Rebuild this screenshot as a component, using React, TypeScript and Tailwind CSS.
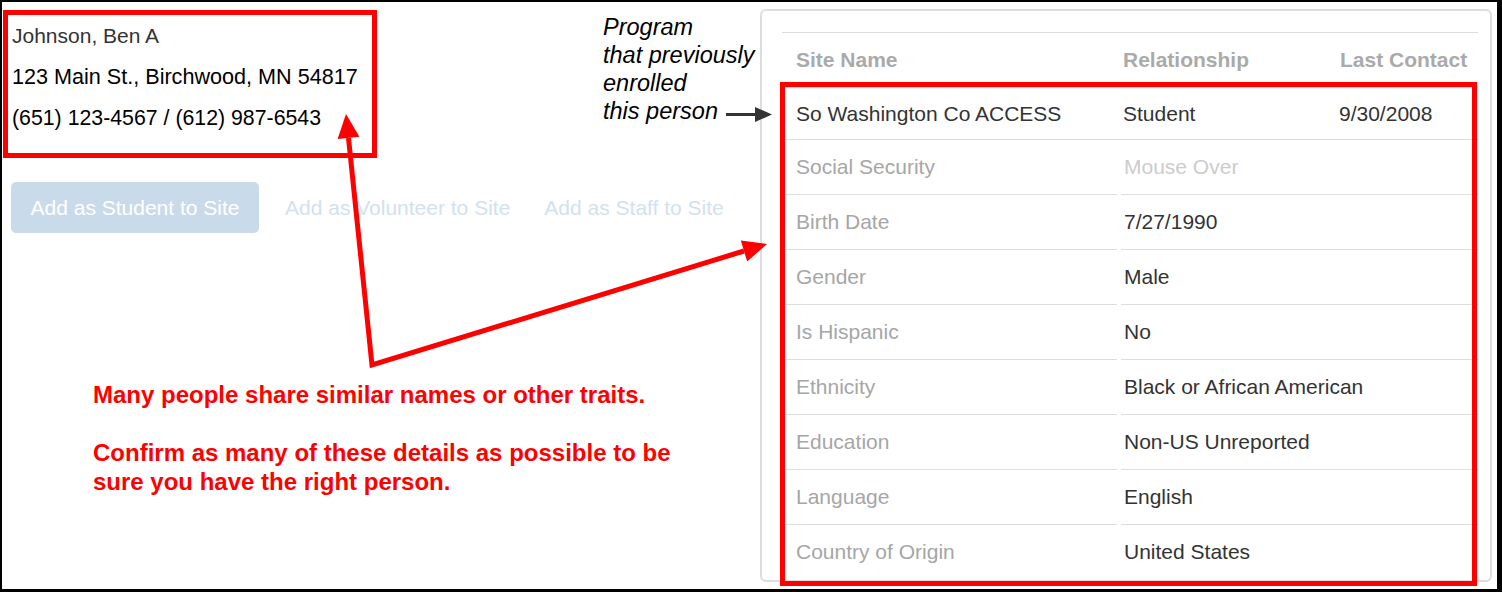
import React from "react";

const details: { label: string; value: string; muted?: boolean }[] = [
  { label: "Social Security", value: "Mouse Over", muted: true },
  { label: "Birth Date", value: "7/27/1990" },
  { label: "Gender", value: "Male" },
  { label: "Is Hispanic", value: "No" },
  { label: "Ethnicity", value: "Black or African American" },
  { label: "Education", value: "Non-US Unreported" },
  { label: "Language", value: "English" },
  { label: "Country of Origin", value: "United States" },
];

export default function App() {
  return (
    <div
      className="relative w-[1502px] h-[592px] bg-white overflow-hidden"
      style={{ fontFamily: '"Liberation Sans", Arial, sans-serif' }}
    >
      <div className="flex h-full border-t-2 border-l-2 border-r-[5px] border-b-[3px] border-black">
        {/* Left column */}
        <div className="flex-1 flex flex-col">
          <div className="mt-[8px] ml-[1px] w-[374px] h-[148px] border-[5px] border-[#ff0000] pl-[4px] text-[21px] leading-[41px]">
            <div className="text-[#333]">Johnson, Ben A</div>
            <div className="text-black text-[21.6px]">123 Main St., Birchwood, MN 54817</div>
            <div className="text-black text-[21.3px] leading-[42px]">(651) 123-4567 / (612) 987-6543</div>
          </div>

          <div className="mt-[24px] ml-[9px] flex items-center text-[21px]">
            <div className="w-[248px] h-[51px] rounded-[5px] bg-[#c9dbeb] text-white flex items-center justify-center">
              Add as Student to Site
            </div>
            <div className="ml-[26px] text-[#d2e1f0]">Add as Volunteer to Site</div>
            <div className="ml-[34px] text-[#d2e1f0]">Add as Staff to Site</div>
          </div>

          <div className="mt-[147px] ml-[91px] text-[24px] leading-[29px] font-bold text-[#ff0000]">
            <div>Many people share similar names or other traits.</div>
            <div>&nbsp;</div>
            <div>Confirm as many of these details as possible to be</div>
            <div>sure you have the right person.</div>
          </div>
        </div>

        {/* Card */}
        <div className="mt-[7px] mr-[5px] w-[732px] h-[573px] border-2 border-[#dddddd] rounded-[6px] pl-[20px] pr-[12px] pt-[21px] text-[21px]">
          <div className="grid grid-cols-[329px_217px_1fr] h-[55px] items-center border-t border-[#dddddd] font-bold text-[#aaaaaa]">
            <div className="pl-[14px]">Site Name</div>
            <div className="pl-[12px]">Relationship</div>
            <div className="pl-[12px]">Last Contact</div>
          </div>
          <div className="grid grid-cols-[329px_217px_1fr] h-[53px] items-center border-t border-b border-[#dddddd] text-[#333]">
            <div className="pl-[14px]">So Washington Co ACCESS</div>
            <div className="pl-[12px]">Student</div>
            <div className="pl-[11px]">9/30/2008</div>
          </div>
          {details.map((d, i) => (
            <div key={d.label} className="grid grid-cols-[335px_1fr] gap-x-[4px]">
              <div
                className={`flex items-center pl-[14px] text-[#a6a6a6] ${
                  i === 0 ? "h-[54px]" : "h-[55px] border-t border-[#dddddd]"
                }`}
              >
                {d.label}
              </div>
              <div
                className={`flex items-center pl-[3px] ${
                  d.muted ? "text-[#cccccc]" : "text-[#333]"
                } ${i === 0 ? "h-[54px]" : "h-[55px] border-t border-[#dddddd]"}`}
              >
                {d.value}
              </div>
            </div>
          ))}
        </div>
      </div>

      {/* Annotation text */}
      <div className="absolute left-[603px] top-[13px] text-[23.5px] leading-[28px] italic text-black">
        <div>Program</div>
        <div>that previously</div>
        <div>enrolled</div>
        <div>this person</div>
      </div>

      {/* Red highlight over table */}
      <div className="absolute left-[780px] top-[82px] w-[697px] h-[504px] border-[5px] border-[#ff0000] pointer-events-none" />

      {/* Arrows */}
      <svg
        className="absolute inset-0 pointer-events-none"
        width={1502}
        height={592}
        viewBox="0 0 1502 592"
      >
        <line x1={726} y1={114.5} x2={758} y2={114.5} stroke="#333" strokeWidth={3} />
        <polygon points="755,107 772,114.5 755,122" fill="#333" />
        <polyline
          points="348.5,137.9 372,365 744,251"
          fill="none"
          stroke="#ff0000"
          strokeWidth={5}
          strokeLinejoin="miter"
        />
        <polygon points="346,114 359.4,136.8 337.6,139" fill="#ff0000" />
        <polygon points="767,244 747.2,261.5 740.8,240.5" fill="#ff0000" />
      </svg>
    </div>
  );
}
